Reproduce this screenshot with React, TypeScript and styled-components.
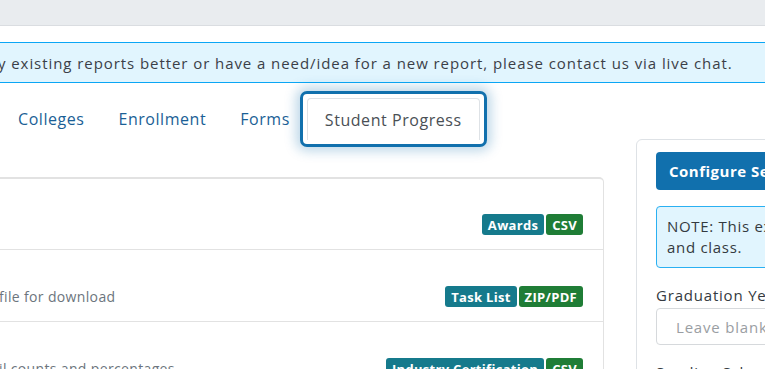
import styled, { createGlobalStyle } from "styled-components";

const GlobalStyle = createGlobalStyle`
  html, body {
    margin: 0;
    padding: 0;
    background: #fff;
    overflow: hidden;
  }
  body {
    font-family: "Open Sans", "Noto Sans", sans-serif;
    color: #343a40;
  }
`;

const TopBar = styled.div`
  height: 25px;
  background: #e9ecef;
  border-bottom: 1px solid #dadde1;
`;

const Content = styled.div`
  padding-top: 16px;
`;

const Alert = styled.div`
  height: 39px;
  display: flex;
  align-items: center;
  background: #e1f5fe;
  border-top: 1px solid #0aa6f5;
  border-bottom: 1px solid #0aa6f5;
  font-size: 15px;
  letter-spacing: 0.93px;
  color: #3b3f48;
  white-space: nowrap;
  overflow: hidden;
  span {
    margin-left: -2px;
  }
`;

const Main = styled.div`
  display: flex;
  align-items: flex-start;
  gap: 32px;
`;

const LeftColumn = styled.div`
  width: 604px;
  flex-shrink: 0;
`;

const TabBar = styled.div`
  display: flex;
  align-items: center;
  height: 56px;
  margin-top: 8px;
  padding-left: 1px;
`;

const Tab = styled.div<{ $active?: boolean }>`
  display: flex;
  align-items: center;
  height: 42px;
  padding: 0 17px;
  font-size: 16px;
  letter-spacing: 0.55px;
  color: ${(p) => (p.$active ? "#4a4f55" : "#1b5f96")};
  background: #fff;
  border: ${(p) => (p.$active ? "1px solid #dee2e6" : "none")};
  border-bottom: none;
  border-radius: 4px 4px 0 0;
  box-sizing: border-box;
  white-space: nowrap;
`;

const FocusRing = styled.div`
  padding: 4px;
  border: 3px solid #1170ad;
  border-radius: 7px;
  box-shadow: 0 0 12px 4px rgba(17, 112, 173, 0.28);
  background: #fff;
  margin-left: -7px;
`;

const Card = styled.div`
  margin-top: 30px;
  border-top: 2px solid #e2e2e2;
  border-right: 1px solid #e2e2e2;
  border-radius: 0 5px 0 0;
`;

const ReportRow = styled.div`
  height: 72px;
  display: flex;
  align-items: flex-end;
  justify-content: space-between;
  padding: 0 20px 14px 0;
  box-sizing: border-box;
  border-bottom: 1px solid #e2e2e2;
  &:first-child {
    height: 71px;
  }
`;

const Description = styled.div`
  font-size: 14px;
  letter-spacing: 0.35px;
  color: #6c757d;
  line-height: 21px;
  white-space: nowrap;
  margin-left: -1px;
`;

const Badges = styled.div`
  display: flex;
  gap: 2px;
`;

const Badge = styled.span<{ $kind: "type" | "format" }>`
  display: inline-flex;
  align-items: center;
  height: 21px;
  padding: 0 6px;
  border-radius: 3px;
  font-size: 13px;
  font-weight: 700;
  letter-spacing: 0.3px;
  color: #fff;
  background: ${(p) => (p.$kind === "type" ? "#157a8c" : "#1f7d36")};
  white-space: nowrap;
`;

const SidePanel = styled.div`
  margin-top: 56px;
  width: 330px;
  flex-shrink: 0;
  border: 1px solid #dee2e6;
  border-radius: 6px;
  padding: 12px 19px;
`;

const ConfigureButton = styled.button`
  display: flex;
  align-items: center;
  width: 100%;
  height: 38px;
  padding: 0 13px;
  border: none;
  border-radius: 4px;
  background: #1170ad;
  color: #fff;
  font-family: inherit;
  font-size: 15px;
  font-weight: 700;
  letter-spacing: 0.5px;
  cursor: pointer;
`;

const Note = styled.div`
  margin-top: 16px;
  padding: 9px 10px;
  background: #e1f5fe;
  border: 1px solid #2ab0f2;
  border-radius: 4px;
  font-size: 15px;
  letter-spacing: 0.7px;
  line-height: 21px;
  color: #343a40;
`;

const Label = styled.div`
  margin-top: 17px;
  font-size: 15px;
  letter-spacing: 0.8px;
  line-height: 21px;
  color: #343a40;
`;

const Input = styled.input`
  display: block;
  width: 100%;
  height: 37px;
  margin-top: 2px;
  box-sizing: border-box;
  padding: 0 19px;
  border: 1px solid #d6d9dc;
  border-radius: 4px;
  font-family: inherit;
  font-size: 15px;
  letter-spacing: 0.8px;
  &::placeholder {
    color: #9a9ea3;
  }
`;

const reports = [
  { text: "", type: "Awards", format: "CSV" },
  { text: "file for download", type: "Task List", format: "ZIP/PDF" },
  {
    text: "il counts and percentages",
    type: "Industry Certification",
    format: "CSV",
  },
];

const tabs = ["Colleges", "Enrollment", "Forms"];

function App() {
  return (
    <>
      <GlobalStyle />
      <TopBar />
      <Content>
        <Alert>
          <span>
            y existing reports better or have a need/idea for a new report,
            please contact us via live chat.
          </span>
        </Alert>
        <Main>
          <LeftColumn>
            <TabBar>
              {tabs.map((t) => (
                <Tab key={t}>{t}</Tab>
              ))}
              <FocusRing>
                <Tab $active>Student Progress</Tab>
              </FocusRing>
            </TabBar>
            <Card>
              {reports.map((r) => (
                <ReportRow key={r.type}>
                  <Description>{r.text}</Description>
                  <Badges>
                    <Badge $kind="type">{r.type}</Badge>
                    <Badge $kind="format">{r.format}</Badge>
                  </Badges>
                </ReportRow>
              ))}
            </Card>
          </LeftColumn>
          <SidePanel>
            <ConfigureButton>Configure Search</ConfigureButton>
            <Note>
              NOTE: This export is sorted by grade
              <br />
              and class.
            </Note>
            <Label>Graduation Year</Label>
            <Input placeholder="Leave blank for all years" />
            <Label>Sending School</Label>
          </SidePanel>
        </Main>
      </Content>
    </>
  );
}

export default App;
